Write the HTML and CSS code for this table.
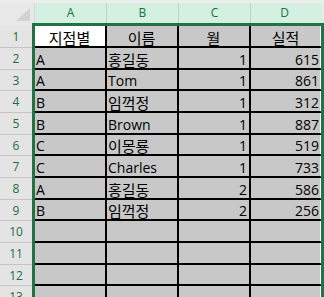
FILE: index.html
```html
<!DOCTYPE html>
<html lang="ko">
<head>
<meta charset="utf-8">
<link rel="stylesheet" href="styles.css">
</head>
<body>
<div class="topstrip"></div>
<div class="sheet">
  <div class="corner"><svg class="tri" width="14" height="13" viewBox="0 0 14 13"><polygon points="14,0 14,13 0,13" fill="#d2d2d2"/></svg></div>
  <div class="ch">A</div><div class="ch">B</div><div class="ch">C</div><div class="ch last">D</div>

  <div class="rh">1</div><div class="c ctr active"><span class="ko">지점별</span></div><div class="c ctr"><span class="ko">이름</span></div><div class="c ctr"><span class="ko">월</span></div><div class="c ctr d"><span class="ko">실적</span></div>
  <div class="rh">2</div><div class="c">A</div><div class="c"><span class="ko">홍길동</span></div><div class="c num">1</div><div class="c num d">615</div>
  <div class="rh">3</div><div class="c">A</div><div class="c">Tom</div><div class="c num">1</div><div class="c num d">861</div>
  <div class="rh">4</div><div class="c">B</div><div class="c"><span class="ko">임꺽정</span></div><div class="c num">1</div><div class="c num d">312</div>
  <div class="rh">5</div><div class="c">B</div><div class="c">Brown</div><div class="c num">1</div><div class="c num d">887</div>
  <div class="rh">6</div><div class="c">C</div><div class="c"><span class="ko">이몽룡</span></div><div class="c num">1</div><div class="c num d">519</div>
  <div class="rh">7</div><div class="c">C</div><div class="c">Charles</div><div class="c num">1</div><div class="c num d">733</div>
  <div class="rh">8</div><div class="c">A</div><div class="c"><span class="ko">홍길동</span></div><div class="c num">2</div><div class="c num d">586</div>
  <div class="rh">9</div><div class="c">B</div><div class="c"><span class="ko">임꺽정</span></div><div class="c num">2</div><div class="c num d">256</div>
  <div class="rh">10</div><div class="c"></div><div class="c"></div><div class="c"></div><div class="c d"></div>
  <div class="rh">11</div><div class="c"></div><div class="c"></div><div class="c"></div><div class="c d"></div>
  <div class="rh">12</div><div class="c"></div><div class="c"></div><div class="c"></div><div class="c d"></div>
  <div class="rh">13</div><div class="c"></div><div class="c"></div><div class="c"></div><div class="c d"></div>

  <div class="selection"></div>
</div>
</body>
</html>
```

FILE: styles.css
```css
html, body {
  margin: 0;
  padding: 0;
  overflow: hidden;
  background: #ffffff;
  width: 324px;
  height: 297px;
}

.topstrip {
  height: 3px;
  background: #ededed;
}

.sheet {
  position: relative;
  display: grid;
  grid-template-columns: 35px 72px 72px 72px 73px;
  grid-template-rows: 23px repeat(4, 22px 22px 21px) 22px;
  font-family: "Open Sans", "Noto Sans CJK KR", sans-serif;
}

.corner {
  background: #e8e8e8;
  box-sizing: border-box;
  border-right: 1px solid #d6d6d6;
  position: relative;
}

.tri {
  position: absolute;
  right: 4px;
  bottom: 5px;
}

.ch {
  background: #d3f0e0;
  color: #1f6e43;
  font-size: 12px;
  display: flex;
  align-items: center;
  justify-content: center;
  padding-bottom: 4px;
  box-sizing: border-box;
  border-right: 1px solid #b8d6c3;
}

.ch.last {
  border-right: 2px solid #e6ebe7;
  padding-right: 4px;
}

.rh {
  background: #e4e4e4;
  color: #1f6e43;
  font-size: 12px;
  display: flex;
  align-items: center;
  justify-content: center;
  padding-right: 3px;
  box-sizing: border-box;
  border-bottom: 1px solid #c4c4c4;
}

.c {
  background: #c8c8c8;
  color: #000;
  font-size: 14px;
  line-height: 17px;
  display: flex;
  align-items: flex-end;
  padding: 0 2px 0 1px;
  box-sizing: border-box;
  border-right: 2px solid #000;
  border-bottom: 2px solid #000;
  white-space: nowrap;
  overflow: hidden;
}

.c.d {
  border-right: 4px solid #ffffff;
  padding-right: 1px;
}

.c.num {
  justify-content: flex-end;
}

.c.ctr {
  justify-content: center;
}

.c.active {
  background: #ffffff;
}

.ko {
  font-family: "Noto Sans CJK KR", sans-serif;
  font-size: 15px;
  line-height: 17px;
}

.selection {
  position: absolute;
  left: 32px;
  top: 20px;
  width: 292px;
  height: 320px;
  box-sizing: border-box;
  border: 3px solid #217346;
  border-bottom: 0;
}
```
